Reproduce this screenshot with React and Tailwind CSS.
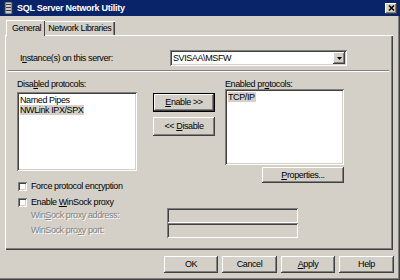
import React from 'react';

const raised =
  'shadow-[inset_-1px_-1px_#404040,inset_1px_1px_#ffffff,inset_-2px_-2px_#808080,inset_2px_2px_#d4d0c8]';
const sunken =
  'shadow-[inset_1px_1px_#808080,inset_-1px_-1px_#ffffff,inset_2px_2px_#404040,inset_-2px_-2px_#d4d0c8]';

function Button({ children, className = '', isDefault = false }) {
  return (
    <div
      className={`flex items-center justify-center bg-[#d4d0c8] text-[9px] text-black ${
        isDefault
          ? 'border border-black shadow-[inset_-1px_-1px_#404040,inset_1px_1px_#ffffff,inset_-2px_-2px_#808080]'
          : raised
      } ${className}`}
    >
      {children}
    </div>
  );
}

function Check({ children, top = '' }) {
  return (
    <div className={`flex h-[9px] items-center gap-[4px] ${top}`}>
      <div className={`h-[9px] w-[9px] bg-white ${sunken}`} />
      <span className="text-[9px] leading-none">{children}</span>
    </div>
  );
}

function DisabledText({ children }) {
  return (
    <span className="text-[9px] leading-none text-[#808080] [text-shadow:1px_1px_0_#ffffff]">
      {children}
    </span>
  );
}

export default function App() {
  return (
    <div
      className="relative h-[280px] w-[400px] overflow-hidden bg-[#d4d0c8] text-[9px] leading-none tracking-[-0.4px] text-black shadow-[inset_-1px_-1px_#404040,inset_-2px_-2px_#808080]"
      style={{ fontFamily: '"Liberation Sans", Arial, sans-serif' }}
    >
      {/* title bar */}
      <div className="flex h-[16px] items-center bg-[#0a246a] pl-[4px] pr-[3px]">
        <svg width="9" height="12" viewBox="0 0 9 12" className="mr-[4px]">
          <rect x="1" y="0" width="7" height="12" fill="#c8c8c8" />
          <rect x="1" y="0" width="7" height="12" fill="none" stroke="#404040" strokeWidth="1" />
          <rect x="2" y="2" width="5" height="1" fill="#404040" />
          <rect x="2" y="5" width="5" height="1" fill="#404040" />
          <rect x="2" y="8" width="5" height="1" fill="#404040" />
        </svg>
        <span className="text-[9px] font-bold leading-none tracking-[-0.25px] text-white">
          SQL Server Network Utility
        </span>
        <div
          className={`ml-auto flex h-[11px] w-[12px] items-center justify-center bg-[#d4d0c8] ${raised}`}
        >
          <svg width="7" height="6" viewBox="0 0 7 6">
            <path d="M1 0.5 L6 5.5 M6 0.5 L1 5.5" stroke="#000" strokeWidth="1.5" />
          </svg>
        </div>
      </div>

      {/* tabs */}
      <div className="ml-[6px] mt-[4px] flex h-[15px] items-end">
        <div className="relative z-10 -mb-[1px] flex h-[16px] items-center border-l border-t border-white bg-[#d4d0c8] pl-[5px] pr-[4px] shadow-[inset_-1px_0_#404040]">
          <span className="text-[9px] leading-none">General</span>
        </div>
        <div className="flex h-[14px] items-center border-t border-white pl-[3px] pr-[4px] shadow-[inset_-1px_0_#404040,inset_-2px_0_#808080]">
          <span className="text-[9px] leading-none">Network Libraries</span>
        </div>
      </div>

      {/* panel */}
      <div className="ml-[5px] h-[215px] w-[388px] border-l border-t border-white pl-[11px] pr-[4px] pt-[14px] shadow-[inset_-1px_-1px_#404040,inset_-2px_-2px_#808080]">
        <div className="flex h-[16px] items-center">
          <span className="w-[153px] pl-[3px] text-[9px] leading-none">
            I<span className="underline">n</span>stance(s) on this server:
          </span>
          <div className={`flex h-[16px] w-[177px] items-center bg-white pl-[3px] pr-[2px] ${sunken}`}>
            <span className="text-[9px] leading-none">SVISAA\MSFW</span>
            <div className={`ml-auto flex h-[12px] w-[12px] items-center justify-center bg-[#d4d0c8] ${raised}`}>
              <svg width="5" height="3" viewBox="0 0 5 3">
                <path d="M0 0 H5 L2.5 3 Z" fill="#000" />
              </svg>
            </div>
          </div>
        </div>

        <div className="-ml-[9px] mt-[4px] h-[2px] w-[381px] border-b border-t border-b-white border-t-[#808080]" />

        <div className="mt-[8px] flex h-[91px]">
          <div className="flex flex-col">
            <span className="h-[12px] text-[9px] leading-none">
              Disa<span className="underline">b</span>led protocols:
            </span>
            <div className={`h-[79px] w-[120px] bg-white pl-[3px] pt-[3px] ${sunken}`}>
              <div className="h-[10px] text-[9px] leading-[10px]">Named Pipes</div>
              <div className="h-[10px] w-fit bg-[#d4d0c8] pr-[1px] text-[9px] leading-[10px]">
                NWLink IPX/SPX
              </div>
            </div>
          </div>

          <div className="ml-[16px] flex flex-col pt-[13px]">
            <Button isDefault className="h-[19px] w-[62px]">
              <span>
                <span className="underline">E</span>nable &gt;&gt;
              </span>
            </Button>
            <Button className="mt-[5px] h-[19px] w-[62px]">
              <span>
                &lt;&lt; <span className="underline">D</span>isable
              </span>
            </Button>
          </div>

          <div className="ml-[10px] flex flex-col">
            <span className="h-[12px] text-[9px] leading-none">
              Enabled pr<span className="underline">o</span>tocols:
            </span>
            <div className={`h-[76px] w-[119px] shrink-0 bg-white pl-[3px] pt-[3px] ${sunken}`}>
              <div className="h-[10px] w-fit bg-[#d4d0c8] pr-[1px] text-[9px] leading-[10px]">
                TCP/IP
              </div>
            </div>
            <div className="mt-[2px] flex shrink-0 justify-end">
              <Button className="h-[16px] w-[82px]">
                <span>
                  <span className="underline">P</span>roperties...
                </span>
              </Button>
            </div>
          </div>
        </div>

        <div className="mt-[11px] flex flex-col pl-[1px]">
          <Check>
            Force protocol enc<span className="underline">r</span>yption
          </Check>
          <Check top="mt-[7px]">
            Enable <span className="underline">W</span>inSock proxy
          </Check>
        </div>

        <div className="mt-[1px] flex h-[15px] items-center pl-[14px]">
          <span className="w-[136px]">
            <DisabledText>
              Win<span className="underline">S</span>ock proxy address:
            </DisabledText>
          </span>
          <div className={`h-[15px] w-[131px] ${sunken}`} />
        </div>
        <div className="flex h-[15px] items-center pl-[14px]">
          <span className="w-[136px]">
            <DisabledText>
              WinSock pro<span className="underline">x</span>y port:
            </DisabledText>
          </span>
          <div className={`h-[15px] w-[131px] ${sunken}`} />
        </div>
      </div>

      {/* bottom buttons */}
      <div className="mt-[6px] flex justify-end gap-[4px] pr-[6px]">
        <Button className="h-[17px] w-[54px]">OK</Button>
        <Button className="h-[17px] w-[55px]">Cancel</Button>
        <Button className="h-[17px] w-[54px]">
          <span>
            <span className="underline">A</span>pply
          </span>
        </Button>
        <Button className="h-[17px] w-[55px]">Help</Button>
      </div>
    </div>
  );
}
